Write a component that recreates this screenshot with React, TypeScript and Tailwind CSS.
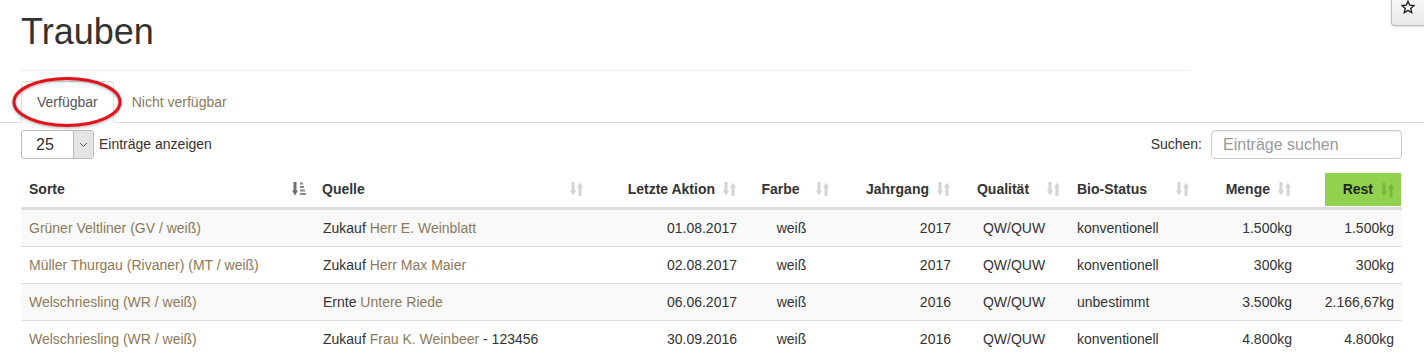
import React from "react";

const LINK = "text-[#8b7a5a]";

function SortIcon({ color = "#d4d4d4" }: { color?: string }) {
  return (
    <svg width="14" height="14" viewBox="0 0 14 14" className="block">
      <rect x="1.5" y="0" width="3" height="9" fill={color} />
      <polygon points="0,8.5 6,8.5 3,13.5" fill={color} />
      <polygon points="7,5.5 13,5.5 10,0.5" fill={color} />
      <rect x="8.5" y="5" width="3" height="9" fill={color} />
    </svg>
  );
}

function SortedIcon() {
  return (
    <svg width="14" height="14" viewBox="0 0 14 14" className="block">
      <rect x="1.5" y="0" width="3" height="9" fill="#6f6f6f" />
      <polygon points="0,8.5 6,8.5 3,13.5" fill="#6f6f6f" />
      <rect x="8" y="0.5" width="3" height="2" fill="#8a8a8a" />
      <rect x="8" y="4" width="4" height="2" fill="#8a8a8a" />
      <rect x="8" y="7.5" width="5" height="2" fill="#8a8a8a" />
      <rect x="8" y="11" width="6" height="2" fill="#8a8a8a" />
    </svg>
  );
}

type Row = {
  sorte: string;
  qType: string;
  qLink: string;
  qExtra?: string;
  date: string;
  farbe: string;
  jahr: string;
  qual: string;
  bio: string;
  menge: string;
  rest: string;
};

const rows: Row[] = [
  {
    sorte: "Grüner Veltliner (GV / weiß)",
    qType: "Zukauf",
    qLink: "Herr E. Weinblatt",
    date: "01.08.2017",
    farbe: "weiß",
    jahr: "2017",
    qual: "QW/QUW",
    bio: "konventionell",
    menge: "1.500kg",
    rest: "1.500kg",
  },
  {
    sorte: "Müller Thurgau (Rivaner) (MT / weiß)",
    qType: "Zukauf",
    qLink: "Herr Max Maier",
    date: "02.08.2017",
    farbe: "weiß",
    jahr: "2017",
    qual: "QW/QUW",
    bio: "konventionell",
    menge: "300kg",
    rest: "300kg",
  },
  {
    sorte: "Welschriesling (WR / weiß)",
    qType: "Ernte",
    qLink: "Untere Riede",
    date: "06.06.2017",
    farbe: "weiß",
    jahr: "2016",
    qual: "QW/QUW",
    bio: "unbestimmt",
    menge: "3.500kg",
    rest: "2.166,67kg",
  },
  {
    sorte: "Welschriesling (WR / weiß)",
    qType: "Zukauf",
    qLink: "Frau K. Weinbeer",
    qExtra: " - 123456",
    date: "30.09.2016",
    farbe: "weiß",
    jahr: "2016",
    qual: "QW/QUW",
    bio: "konventionell",
    menge: "4.800kg",
    rest: "4.800kg",
  },
];

const thBase =
  "relative pl-[8px] pr-[30px] py-[8px] leading-[20px] font-bold border-b-2 border-[#ddd] align-top whitespace-nowrap";
const tdBase = "px-[8px] py-[8px] leading-[20px] border-t border-[#ddd] whitespace-nowrap";

export default function App() {
  return (
    <div className="relative w-[1424px] h-[357px] overflow-hidden bg-white font-['Liberation_Sans',Arial,sans-serif] text-[14px] text-[#333]">
      {/* star button */}
      <div className="absolute -top-[6px] right-0 w-[33px] h-[32px] border-l border-b border-[#bdbdbd] rounded-bl-[4px] bg-gradient-to-b from-[#fafafa] to-[#e9e9e9] shadow-[0_1px_2px_rgba(0,0,0,0.15)] flex justify-center pt-[6px]">
        <svg width="14" height="14" viewBox="0 0 24 24">
          <polygon
            points="12,2 14.9,8.9 22.3,9.5 16.7,14.4 18.4,21.7 12,17.8 5.6,21.7 7.3,14.4 1.7,9.5 9.1,8.9"
            fill="none"
            stroke="#1a1a1a"
            strokeWidth="2.2"
            strokeLinejoin="miter"
          />
        </svg>
      </div>

      {/* header */}
      <div className="pl-[21px] pt-[12px]">
        <div className="w-[1170px] border-b border-[#eee] pb-[18px]">
          <h1 className="text-[36px] leading-[40px] font-normal text-[#333]">Trauben</h1>
        </div>
      </div>

      {/* tabs */}
      <div className="mt-[10px] flex border-b border-[#ddd] pl-[21px] h-[42px]">
        <div className="h-[42px] border border-[#ddd] border-b-white bg-white rounded-t-[4px] px-[15px] py-[10px] leading-[20px] text-[#555] -mb-px">
          Verfügbar
        </div>
        <div className={`ml-[2px] h-[41px] border border-transparent px-[15px] py-[10px] leading-[20px] ${LINK}`}>
          Nicht verfügbar
        </div>
      </div>

      {/* red ellipse */}
      <svg
        className="absolute left-[11px] top-[75px] drop-shadow-[0_1px_1.5px_rgba(0,0,0,0.35)]"
        width="114"
        height="54"
        viewBox="0 0 114 54"
      >
        <ellipse cx="56" cy="27" rx="53" ry="23.5" fill="none" stroke="#e3121a" strokeWidth="3" />
      </svg>

      {/* controls */}
      <div className="mt-[7px] flex items-center justify-between pl-[21px] pr-[22px] h-[29px]">
        <div className="flex items-center">
          <div className="flex w-[73px] h-[29px] border border-[#bbb] rounded-[3px] overflow-hidden">
            <div className="flex-1 pl-[14px] text-[16px] leading-[27px] text-[#333]">25</div>
            <div className="w-[20px] border-l border-[#bbb] bg-[#e4e4e4] flex items-center justify-center">
              <svg width="9" height="6" viewBox="0 0 9 6">
                <polyline points="1,1 4.5,4.5 8,1" fill="none" stroke="#555" strokeWidth="1" />
              </svg>
            </div>
          </div>
          <span className="ml-[5px]">Einträge anzeigen</span>
        </div>
        <div className="flex items-center">
          <span className="mr-[9px]">Suchen:</span>
          <div className="w-[191px] h-[29px] border border-[#ccc] rounded-[4px] shadow-[inset_0_1px_1px_rgba(0,0,0,0.075)] pl-[11px] text-[16px] leading-[27px] text-[#999]">
            Einträge suchen
          </div>
        </div>
      </div>

      {/* table */}
      <table className="mt-[12px] ml-[21px] w-[1381px] table-fixed border-separate border-spacing-0">
        <colgroup>
          <col className="w-[293px]" />
          <col className="w-[278px]" />
          <col className="w-[153px]" />
          <col className="w-[93px]" />
          <col className="w-[121px]" />
          <col className="w-[110px]" />
          <col className="w-[129px]" />
          <col className="w-[102px]" />
          <col className="w-[102px]" />
        </colgroup>
        <thead>
          <tr>
            <th className={`${thBase} text-left`}>
              Sorte
              <span className="absolute right-[8px] top-[11px]">
                <SortedIcon />
              </span>
            </th>
            <th className={`${thBase} text-left`}>
              Quelle
              <span className="absolute right-[8px] top-[11px]">
                <SortIcon />
              </span>
            </th>
            <th className={`${thBase} text-right`}>
              Letzte Aktion
              <span className="absolute right-[8px] top-[11px]">
                <SortIcon />
              </span>
            </th>
            <th className={`${thBase} text-center`}>
              Farbe
              <span className="absolute right-[8px] top-[11px]">
                <SortIcon />
              </span>
            </th>
            <th className={`${thBase} text-right`}>
              Jahrgang
              <span className="absolute right-[8px] top-[11px]">
                <SortIcon />
              </span>
            </th>
            <th className={`${thBase} text-center`}>
              Qualität
              <span className="absolute right-[8px] top-[11px]">
                <SortIcon />
              </span>
            </th>
            <th className={`${thBase} text-left`}>
              Bio-Status
              <span className="absolute right-[8px] top-[11px]">
                <SortIcon />
              </span>
            </th>
            <th className={`${thBase} text-right`}>
              Menge
              <span className="absolute right-[8px] top-[11px]">
                <SortIcon />
              </span>
            </th>
            <th className="p-0 pl-[25px] pr-[1px] pt-[2px] pb-[1px] font-bold border-b-2 border-[#ddd] align-top">
              <div className="relative h-[33px] bg-[#92d14f] text-right pr-[28px] leading-[33px] text-[#222]">
                Rest
                <span className="absolute right-[6px] top-[10px]">
                  <SortIcon color="#74b83a" />
                </span>
              </div>
            </th>
          </tr>
        </thead>
        <tbody>
          {rows.map((r, i) => (
            <tr key={i} className={i % 2 === 0 ? "bg-[#f9f9f9]" : "bg-white"}>
              <td className={`${tdBase} text-left ${LINK}`}>{r.sorte}</td>
              <td className={`${tdBase} text-left pl-[9px]`}>
                {r.qType} <span className={LINK}>{r.qLink}</span>
                {r.qExtra ? <span>{r.qExtra}</span> : null}
              </td>
              <td className={`${tdBase} text-right`}>{r.date}</td>
              <td className={`${tdBase} text-center`}>{r.farbe}</td>
              <td className={`${tdBase} text-right`}>{r.jahr}</td>
              <td className={`${tdBase} text-center`}>{r.qual}</td>
              <td className={`${tdBase} text-left`}>{r.bio}</td>
              <td className={`${tdBase} text-right`}>{r.menge}</td>
              <td className={`${tdBase} text-right`}>{r.rest}</td>
            </tr>
          ))}
        </tbody>
      </table>
    </div>
  );
}
